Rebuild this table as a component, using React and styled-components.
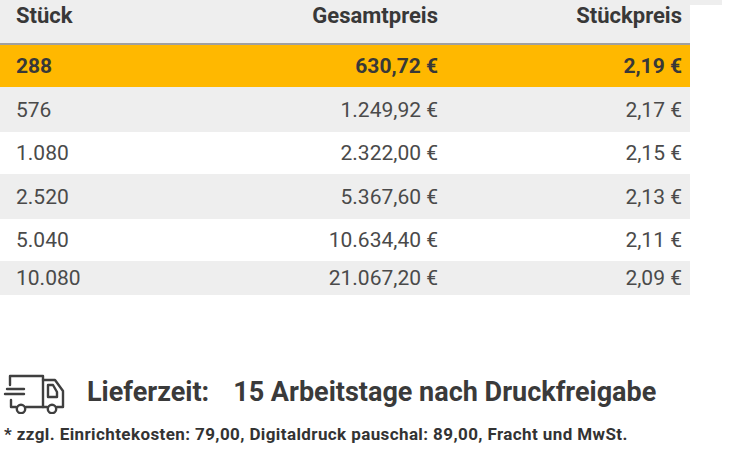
import React from "react"
import styled, { createGlobalStyle } from "styled-components"

const GlobalStyle = createGlobalStyle`
  html, body {
    margin: 0;
    padding: 0;
    background: #fff;
  }
  body {
    font-family: Roboto, "Noto Sans", "Liberation Sans", sans-serif;
    color: #3d3d3d;
  }
`

const rows = [
  { qty: "288", total: "630,72 €", unit: "2,19 €", height: 42, active: true },
  { qty: "576", total: "1.249,92 €", unit: "2,17 €", height: 45, shaded: true },
  { qty: "1.080", total: "2.322,00 €", unit: "2,15 €", height: 42 },
  { qty: "2.520", total: "5.367,60 €", unit: "2,13 €", height: 45, shaded: true },
  { qty: "5.040", total: "10.634,40 €", unit: "2,11 €", height: 42 },
  { qty: "10.080", total: "21.067,20 €", unit: "2,09 €", height: 34, shaded: true },
]

export default function App() {
  return (
    <Page>
      <GlobalStyle />
      <TopStrip />
      <Table>
        <HeaderRow>
          <Cell>Stück</Cell>
          <Cell $right>Gesamtpreis</Cell>
          <Cell $right>Stückpreis</Cell>
        </HeaderRow>
        {rows.map((r) => (
          <Row
            key={r.qty}
            $height={r.height}
            $active={r.active}
            $shaded={r.shaded}
          >
            <Cell>{r.qty}</Cell>
            <Cell $right>{r.total}</Cell>
            <Cell $right>{r.unit}</Cell>
          </Row>
        ))}
      </Table>

      <Delivery>
        <TruckIcon />
        <DeliveryLabel>Lieferzeit:</DeliveryLabel>
        <DeliveryValue>15 Arbeitstage nach Druckfreigabe</DeliveryValue>
      </Delivery>
      <Note>* zzgl. Einrichtekosten: 79,00, Digitaldruck pauschal: 89,00, Fracht und MwSt.</Note>
    </Page>
  )
}

function TruckIcon() {
  return (
    <Icon viewBox="0 0 64 44" width="64" height="44">
      <g fill="none" stroke="#3f3f3f" strokeWidth="2.4" strokeLinecap="round" strokeLinejoin="round">
        <path d="M9 15 V6 H42 V37" />
        <path d="M25 37 H46" />
        <path d="M42 10 H54 L62 21 V37 H56" />
        <path d="M47 15 H52 L56 22 V27 H47 Z" />
        <path d="M6 19 H23" />
        <path d="M4 24 H23" />
        <path d="M10 30 V37 H15" />
        <circle cx="20" cy="39" r="4.2" />
        <circle cx="51" cy="39" r="4.2" />
      </g>
    </Icon>
  )
}

const Page = styled.div`
  width: 730px;
  height: 468px;
  overflow: hidden;
`

const TopStrip = styled.div`
  width: 722px;
  height: 5px;
  background: #eeeeee;
`

const Table = styled.div`
  width: 690px;
  display: flex;
  flex-direction: column;
`

const HeaderRow = styled.div`
  display: grid;
  grid-template-columns: 180px 242px 1fr;
  height: 38px;
  padding: 0 8px 0 16px;
  background: #eeeeee;
  border-bottom: 2px solid #a0a0a0;
  font-size: 22px;
  line-height: 22px;
  font-weight: 700;
  color: #383838;
`

const Row = styled.div`
  display: grid;
  grid-template-columns: 180px 242px 1fr;
  align-items: center;
  height: ${(p) => p.$height}px;
  padding: 0 8px 0 16px;
  box-sizing: border-box;
  background: ${(p) => (p.$active ? "#ffb800" : p.$shaded ? "#eeeeee" : "#ffffff")};
  font-size: 21px;
  line-height: 24px;
  font-weight: ${(p) => (p.$active ? 700 : 400)};
  color: ${(p) => (p.$active ? "#383838" : "#4a4a4a")};
`

const Cell = styled.div`
  text-align: ${(p) => (p.$right ? "right" : "left")};
  white-space: nowrap;
`

const Delivery = styled.div`
  display: flex;
  align-items: center;
  height: 44px;
  margin-top: 75px;
  padding-left: 1px;
`

const Icon = styled.svg`
  display: block;
  flex: none;
`

const DeliveryLabel = styled.span`
  margin-left: 22px;
  font-size: 27px;
  line-height: 32px;
  font-weight: 700;
  color: #3a3a3a;
`

const DeliveryValue = styled.span`
  margin-left: 24px;
  font-size: 27px;
  line-height: 32px;
  font-weight: 700;
  color: #3a3a3a;
`

const Note = styled.div`
  margin-top: 10px;
  padding-left: 4px;
  font-size: 17px;
  line-height: 20px;
  letter-spacing: 0.4px;
  font-weight: 700;
  color: #333;
  white-space: nowrap;
`
